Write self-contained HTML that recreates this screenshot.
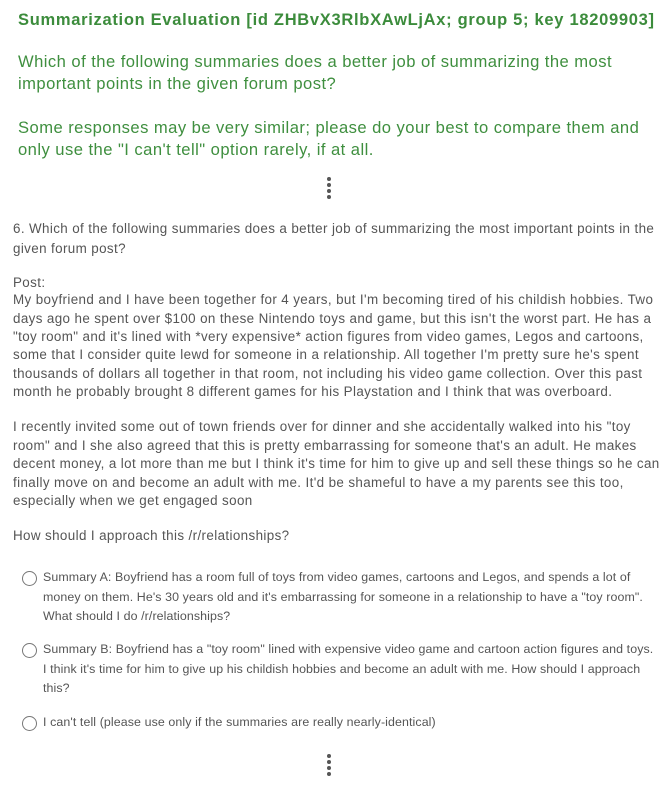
<!DOCTYPE html>
<html><head><meta charset="utf-8"><style>
body{margin:0;width:669px;height:804px;background:#fff;font-family:"Liberation Sans",sans-serif;overflow:hidden;position:relative}
.a{position:absolute;white-space:nowrap;left:0}
.t{color:#3c8c3c;font-weight:bold;font-size:16.5px;left:18px;letter-spacing:0.7px}
.g{color:#3f8f3f;font-size:16.6px;left:18px;letter-spacing:0.45px}
.b{color:#555;font-size:13.4px;left:13px;letter-spacing:0.38px}
.o{color:#555;font-size:12.4px;left:43px;letter-spacing:0.1px}
.r{position:absolute;left:22px;width:13px;height:13px;border:1px solid #777;border-radius:50%}
.d{position:absolute;left:327px;width:4px;height:4px;border-radius:50%;background:#555}
</style></head><body>
<div class="a t" style="top:11px">Summarization Evaluation [id ZHBvX3RlbXAwLjAx; group 5; key 18209903]</div>
<div class="a g" style="top:52px">Which of the following summaries does a better job of summarizing the most</div>
<div class="a g" style="top:74px">important points in the given forum post?</div>
<div class="a g" style="top:118px">Some responses may be very similar; please do your best to compare them and</div>
<div class="a g" style="top:140px">only use the "I can't tell" option rarely, if at all.</div>
<div class="d" style="top:177px"></div><div class="d" style="top:183px"></div><div class="d" style="top:189px"></div><div class="d" style="top:195px"></div>
<div class="a b" style="top:221px">6. Which of the following summaries does a better job of summarizing the most important points in the</div>
<div class="a b" style="top:241px">given forum post?</div>
<div class="a b" style="top:275px">Post:</div>
<div class="a b" style="top:292px">My boyfriend and I have been together for 4 years, but I'm becoming tired of his childish hobbies. Two</div>
<div class="a b" style="top:311px">days ago he spent over $100 on these Nintendo toys and game, but this isn't the worst part. He has a</div>
<div class="a b" style="top:329px">"toy room" and it's lined with *very expensive* action figures from video games, Legos and cartoons,</div>
<div class="a b" style="top:347px">some that I consider quite lewd for someone in a relationship. All together I'm pretty sure he's spent</div>
<div class="a b" style="top:366px">thousands of dollars all together in that room, not including his video game collection. Over this past</div>
<div class="a b" style="top:384px">month he probably brought 8 different games for his Playstation and I think that was overboard.</div>
<div class="a b" style="top:419px">I recently invited some out of town friends over for dinner and she accidentally walked into his "toy</div>
<div class="a b" style="top:438px">room" and I she also agreed that this is pretty embarrassing for someone that's an adult. He makes</div>
<div class="a b" style="top:456px">decent money, a lot more than me but I think it's time for him to give up and sell these things so he can</div>
<div class="a b" style="top:475px">finally move on and become an adult with me. It'd be shameful to have a my parents see this too,</div>
<div class="a b" style="top:493px">especially when we get engaged soon</div>
<div class="a b" style="top:528px">How should I approach this /r/relationships?</div>
<div class="r" style="top:571px"></div>
<div class="a o" style="top:570px">Summary A: Boyfriend has a room full of toys from video games, cartoons and Legos, and spends a lot of</div>
<div class="a o" style="top:590px">money on them. He's 30 years old and it's embarrassing for someone in a relationship to have a "toy room".</div>
<div class="a o" style="top:609px">What should I do /r/relationships?</div>
<div class="r" style="top:643px"></div>
<div class="a o" style="top:642px">Summary B: Boyfriend has a "toy room" lined with expensive video game and cartoon action figures and toys.</div>
<div class="a o" style="top:662px">I think it's time for him to give up his childish hobbies and become an adult with me. How should I approach</div>
<div class="a o" style="top:681px">this?</div>
<div class="r" style="top:716px"></div>
<div class="a o" style="top:715px">I can't tell (please use only if the summaries are really nearly-identical)</div>
<div class="d" style="top:754px"></div><div class="d" style="top:760px"></div><div class="d" style="top:766px"></div><div class="d" style="top:772px"></div>
</body></html>
